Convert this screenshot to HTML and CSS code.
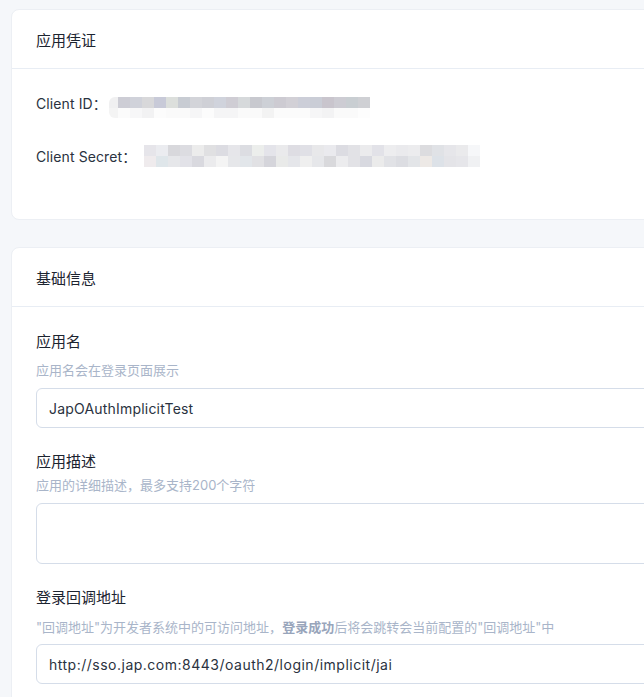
FILE: index.html
```html
<!DOCTYPE html>
<html lang="zh-CN">
<head>
<meta charset="utf-8">
<title>应用配置</title>
<link rel="stylesheet" href="styles.css">
</head>
<body>
<div class="page">
  <section class="card">
    <header class="card-header"><h2 class="card-title">应用凭证</h2></header>
    <div class="card-body credentials">
      <div class="cred-row">
        <span class="cred-label">Client ID：</span>
        <span class="mosaic mosaic-id"></span>
      </div>
      <div class="cred-row">
        <span class="cred-label">Client Secret：</span>
        <span class="mosaic mosaic-secret"></span>
      </div>
    </div>
  </section>

  <section class="card card-basic">
    <header class="card-header"><h2 class="card-title">基础信息</h2></header>
    <div class="card-body form">
      <div class="form-item">
        <div class="form-label">应用名</div>
        <div class="form-hint">应用名会在登录页面展示</div>
        <div class="field">JapOAuthImplicitTest</div>
      </div>
      <div class="form-item item-desc">
        <div class="form-label">应用描述</div>
        <div class="form-hint">应用的详细描述，最多支持200个字符</div>
        <div class="field field-area"></div>
      </div>
      <div class="form-item item-callback">
        <div class="form-label">登录回调地址</div>
        <div class="form-hint">"回调地址"为开发者系统中的可访问地址，<b>登录成功</b>后将会跳转会当前配置的"回调地址"中</div>
        <div class="field field-url">http://sso.jap.com:8443/oauth2/login/implicit/jai</div>
      </div>
    </div>
  </section>
</div>
</body>
</html>
```

FILE: styles.css
```css
html, body {
  margin: 0;
  padding: 0;
  background: #f5f7fa;
  overflow: hidden;
}

body {
  font-family: Inter, "Noto Sans CJK SC", sans-serif;
  color: #1f2733;
  -webkit-font-smoothing: antialiased;
}

.page {
  padding: 9px 0 0 11px;
  width: 900px;
}

.card {
  background: #ffffff;
  border: 1px solid #eceff4;
  border-radius: 8px;
  width: 860px;
}

.card-basic {
  margin-top: 27px;
}

.card-header {
  height: 58px;
  display: flex;
  align-items: center;
  padding: 0 24px;
  border-bottom: 1px solid #e8edf4;
}

.card-title {
  margin: 0;
  font-size: 15px;
  font-weight: 400;
  color: #1c2430;
}

.card-body {
  padding: 24px;
}

.credentials {
  padding-bottom: 53px;
  display: flex;
  flex-direction: column;
  gap: 33px;
}

.cred-row {
  display: flex;
  align-items: center;
  height: 20px;
  font-size: 14px;
  color: #2a3240;
  letter-spacing: 0.1px;
}

.cred-label {
  white-space: nowrap;
}

.mosaic {
  display: block;
  height: 21px;
  background-repeat: no-repeat;
}

.mosaic-id {
  margin-left: 2px;
  margin-top: 9px;
  width: 261px;
  background-image:
    linear-gradient(90deg, #f0f0f1 0 9px, #cdcdd5 9px 21px, #d0d2da 21px 33px, #d8d8da 33px 45px, #c8cad8 45px 57px, #dcdfdc 57px 69px, #c8ccd3 69px 81px, #d3d4d9 81px 93px, #cfd0d6 93px 105px, #d0d3dc 105px 117px, #cfcdd4 117px 129px, #d6d9db 129px 141px, #c8c9cf 141px 153px, #cdd0d6 153px 165px, #cdcbd2 165px 177px, #d2d0d6 177px 189px, #ccced8 189px 201px, #cacdd6 201px 213px, #c9c5cd 213px 225px, #cdccd3 225px 237px, #c9ced2 237px 249px, #cfd0d4 249px 261px),
    linear-gradient(90deg, #f4f4f4 0 9px, #fbfbfb 9px 21px, #f7f7f8 21px 33px, #f2f2f3 33px 45px, #fcfcfc 45px 57px, #fafafa 57px 81px, #f6f6f7 81px 93px, #fcfcfc 93px 105px, #f5f5f6 105px 129px, #fafafa 129px 153px, #f3f3f3 153px 165px, #fbfbfb 165px 201px, #f6f6f7 201px 213px, #f3f3f4 213px 225px, #fafafa 225px 249px, #fdfdfd 249px 261px);
  background-size: 100% 11px, 100% 10px;
  background-position: 0 0, 0 11px;
  border-radius: 6px 0 0 6px;
}

.mosaic-secret {
  margin-left: 8px;
  width: 336px;
  height: 22px;
  background-image:
    linear-gradient(90deg, #e6e5ea 0 12px, #ebecf0 12px 24px, #d8d8dc 24px 36px, #dcdce1 36px 48px, #ececec 48px 60px, #e0e0e2 60px 72px, #dcdce2 72px 84px, #e6e6ea 84px 96px, #dcdde2 96px 108px, #eceeec 108px 120px, #e4e4ea 120px 132px, #eaeaec 132px 144px, #dedde3 144px 156px, #e0e0e6 156px 168px, #e8e8ea 168px 180px, #eaeaee 180px 192px, #dcdce2 192px 204px, #e2e2e6 204px 216px, #ebebed 216px 228px, #e2e2e8 228px 240px, #ededef 240px 252px, #eaeaed 252px 264px, #ececee 264px 276px, #dcdcdf 276px 288px, #e0e2e6 288px 300px, #e6e6ea 300px 312px, #eaeaec 312px 324px, #f6f7f9 324px 336px),
    linear-gradient(90deg, #efebed 0 12px, #dfe6ea 12px 24px, #e6e7ea 24px 36px, #e2e2e8 36px 48px, #d9d9df 48px 60px, #ebebed 60px 72px, #f4f4f4 72px 84px, #e6e7ea 84px 96px, #e2e6ea 96px 108px, #e1e1e4 108px 120px, #d5d5db 120px 132px, #e9eae9 132px 144px, #e5e6ea 144px 156px, #efefef 156px 168px, #e6e7ea 168px 180px, #d9d9dc 180px 192px, #ececee 192px 204px, #e2e2e6 204px 216px, #d8d9e0 216px 228px, #ebebeb 228px 240px, #e1e2e6 240px 252px, #dcdde2 252px 264px, #e3e5e8 264px 276px, #ede9e6 276px 288px, #dde2e8 288px 300px, #e4e4e8 300px 312px, #e6e6ea 312px 324px, #f0f1f3 324px 336px);
  background-size: 100% 11px, 100% 11px;
  background-position: 0 0, 0 11px;
}

.form {
  display: flex;
  flex-direction: column;
  gap: 23px;
}

.form-label {
  font-size: 15px;
  line-height: 22px;
  color: #1c2430;
}

.form-hint {
  margin-top: 7px;
  font-size: 13px;
  line-height: 20px;
  color: #a9b5c9;
  white-space: nowrap;
}

.form-hint b {
  font-weight: 700;
  color: #98a5bb;
}

.item-desc .form-hint {
  margin-top: 2px;
}

.item-callback .form-hint {
  margin-top: 8px;
}

.field {
  margin-top: 8px;
  height: 38px;
  border: 1px solid #d5dde9;
  border-radius: 6px;
  padding: 0 12px;
  display: flex;
  align-items: center;
  font-size: 14px;
  letter-spacing: 0.2px;
  color: #2a3240;
  box-sizing: content-box;
}

.field-area {
  height: 59px;
}

.field-url {
  letter-spacing: 0.5px;
}

.item-callback .field {
  margin-top: 7px;
}
```
